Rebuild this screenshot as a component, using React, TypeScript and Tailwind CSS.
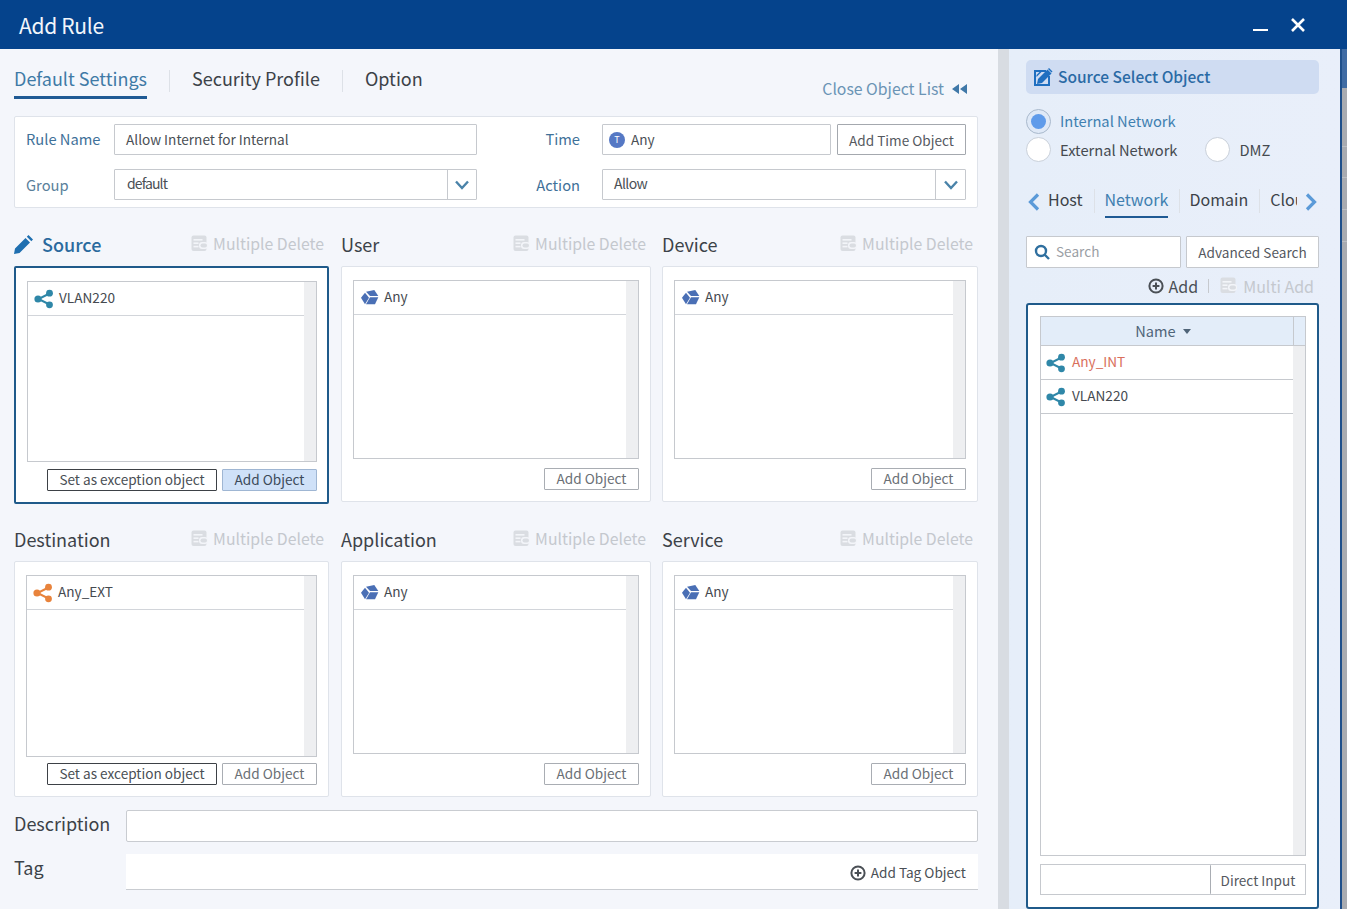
import React from "react";

const Share = ({ c = "#2f87a8", s = 20 }: { c?: string; s?: number }) => (
  <svg width={s} height={s} viewBox="0 0 20 20" fill="none" className="shrink-0">
    <path d="M15.5 4.5 4.5 10l11 5.5" stroke={c} strokeWidth="2" />
    <circle cx="15.5" cy="4.2" r="3.4" fill={c} />
    <circle cx="4" cy="10" r="3.6" fill={c} />
    <circle cx="15.5" cy="15.8" r="3.4" fill={c} />
  </svg>
);

const AnyIcon = () => (
  <svg width="18" height="15" viewBox="0 0 18 15" className="ml-[1px] shrink-0" fill="#4a6fb5">
    <path d="M0 7.700 4 2.700 8 7.700 4 14.300Z" />
    <path d="M5 1.700 13.300 0 17.300 6 9 6Z" />
    <path d="M9 7.300 17.300 7.300 14 14.300 5 14.300Z" />
  </svg>
);

const DelIcon = () => (
  <svg width="17" height="17" viewBox="0 0 17 17" className="shrink-0">
    <rect x="0.5" y="0.5" width="15" height="15.5" rx="2" fill="#dadde2" />
    <rect x="2.5" y="4" width="9" height="1.6" fill="#f3f5f9" />
    <rect x="2.5" y="7.4" width="5" height="1.6" fill="#f3f5f9" />
    <rect x="2.5" y="10.8" width="5" height="1.6" fill="#f3f5f9" />
    <rect x="8" y="7" width="9" height="7" rx="3" fill="#f3f5f9" />
    <rect x="9.5" y="8.4" width="6.5" height="4.2" rx="2" fill="#dadde2" />
  </svg>
);

const AddIcon = () => (
  <svg width="16" height="16" viewBox="0 0 16 16" className="shrink-0" fill="none">
    <circle cx="8" cy="8" r="6.6" stroke="#4a4f55" strokeWidth="2" />
    <path d="M8 4.6v6.8M4.6 8h6.8" stroke="#4a4f55" strokeWidth="2" />
  </svg>
);

const Chev = () => (
  <svg width="16" height="10" viewBox="0 0 16 10" fill="none">
    <path d="M2 1.5 8 8l6-6.500" stroke="#4a83a9" strokeWidth="2.400" />
  </svg>
);

const Arrow = ({ left }: { left?: boolean }) => (
  <svg width="12" height="18" viewBox="0 0 12 18" fill="none" className="shrink-0">
    <path d={left ? "M10 1.500 2.500 9l7.500 7.500" : "M2 1.500 9.500 9 2 16.500"} stroke="#5b9ad8" strokeWidth="3.200" />
  </svg>
);

const Btn = ({ className, children }: { className: string; children: React.ReactNode }) => (
  <div className={`flex items-center justify-center whitespace-nowrap rounded-[1px] border text-[13.6px] leading-none ${className}`}>{children}</div>
);

const Multi = () => (
  <div className="ml-auto mr-[5px] flex items-center gap-[5px] pb-[3px] text-[15.800px] text-[#c4c8ce]">
    <DelIcon />
    <span>Multiple Delete</span>
  </div>
);

const List = ({ h, icon, label }: { h: string; icon: React.ReactNode; label: string }) => (
  <div className={`flex border border-[#c6c9ce] bg-white ${h}`}>
    <div className="min-w-0 flex-1">
      <div className="flex h-[34px] items-center gap-[5px] border-b border-[#d2d5da] pl-[6px] text-[13.6px] text-[#454a50]">
        {icon}
        <span className="mb-[3px]">{label}</span>
      </div>
    </div>
    <div className="w-[12px] bg-[#eeeff1]" />
  </div>
);

const Section = ({
  w,
  gap,
  title,
  active,
  list,
  pad,
  buttons,
}: {
  w: string;
  gap?: string;
  title: React.ReactNode;
  active?: boolean;
  list: React.ReactNode;
  pad: string;
  buttons: React.ReactNode;
}) => (
  <div className={`${w} ${gap ?? ""}`}>
    <div className="flex h-[58px] items-center pt-[16px]">
      {title}
      <Multi />
    </div>
    <div className={`flex flex-col rounded-[2px] bg-white pb-[11px] ${pad} ${active ? "border-2 border-[#1f5a8a]" : "border border-[#dfe3ea]"}`}>
      {list}
      <div className="mt-auto flex justify-end gap-[5px]">{buttons}</div>
    </div>
  </div>
);

const H = ({ children }: { children: React.ReactNode }) => <span className="mb-[2px] text-[18px] text-[#3c4248]">{children}</span>;

const AddObj = ({ active }: { active?: boolean }) => (
  <Btn className={`h-[22px] w-[95px] pb-[1px] ${active ? "border-[#9fb6d3] bg-[#cfe1f8] text-[#3c4a5a]" : "border-[#a9adb3] bg-white text-[#6a6f75]"}`}>Add Object</Btn>
);
const Except = () => (
  <Btn className="h-[22px] w-[170px] border-[#3d4146] bg-white pb-[1px] text-[#4a4f55]">Set as exception object</Btn>
);

const Divider = () => <div className="h-[24px] w-px bg-[#dde1e7]" />;

export default function App() {
  return (
    <div className="flex h-[909px] w-[1347px] flex-col overflow-hidden bg-[#a9abb0] font-['Noto_Sans_CJK_KR','Noto_Sans',sans-serif]">
      <header className="flex h-[49px] shrink-0 items-center bg-[#05438c] pl-[19px]">
        <span className="mt-[2px] text-[21px] tracking-[-0.3px] text-[#f2f6fb]">Add Rule</span>
        <div className="ml-auto mr-[41px] flex items-center">
          <div className="mt-[11px] h-[2.500px] w-[15px] bg-white" />
          <svg width="16" height="16" viewBox="0 0 16 16" className="ml-[22px]" fill="none">
            <path d="M2 2l12 12M14 2 2 14" stroke="#fff" strokeWidth="2.600" />
          </svg>
        </div>
      </header>

      <div className="flex min-h-0 flex-1">
        {/* main form */}
        <main className="w-[998px] shrink-0 bg-[#f4f6fb] pl-[14px] pr-[20px]">
          <div className="flex h-[50px] items-start">
            <div className="mt-[15px] h-[35px] w-[133px] whitespace-nowrap border-b-[3px] border-[#1f5a94] text-[18px] leading-[28px] text-[#3f7aa6]">Default Settings</div>
            <div className="ml-[22px] mt-[21px] h-[22px] w-px bg-[#dde1e7]" />
            <div className="ml-[22px] mt-[15px] whitespace-nowrap text-[18px] leading-[28px] text-[#3c4248]">Security Profile</div>
            <div className="ml-[22px] mt-[21px] h-[22px] w-px bg-[#dde1e7]" />
            <div className="ml-[22px] mt-[15px] text-[18px] leading-[28px] text-[#3c4248]">Option</div>
            <div className="ml-auto mr-[11px] mt-[28px] flex items-center gap-[8px] text-[15.800px] leading-[24px] text-[#6b94b5]">
              <span>Close Object List</span>
              <svg width="15" height="10" viewBox="0 0 15 10" fill="#3f78a8">
                <path d="M7 0v10L0 5zM15 0v10L8 5z" />
              </svg>
            </div>
          </div>

          <section className="mt-[17px] flex h-[92px] flex-col gap-[14px] rounded-[2px] border border-[#dfe3ea] bg-white pl-[11px] pt-[7px]">
            <div className="flex h-[31px] items-center text-[14.700px]">
              <span className="w-[88px] text-[#3f7199]">Rule Name</span>
              <div className="flex h-full w-[363px] items-center rounded-[1px] border border-[#c6c9ce] pl-[11px] text-[13.6px] text-[#4a4f55]">Allow Internet for Internal</div>
              <span className="w-[103px] text-right text-[#3f7199]">Time</span>
              <div className="ml-[22px] flex h-full w-[229px] items-center gap-[6px] rounded-[1px] border border-[#c6c9ce] pl-[6px] text-[13.6px] text-[#4a4f55]">
                <span className="flex h-[16px] w-[16px] items-center justify-center rounded-full bg-[#5578c4] text-[9px] leading-none text-white">T</span>
                Any
              </div>
              <Btn className="ml-[6px] h-full w-[129px] border-[#a4a8ae] pt-[2px] text-[#55595f]">Add Time Object</Btn>
            </div>
            <div className="flex h-[31px] items-center text-[14.700px]">
              <span className="mt-[2px] w-[88px] text-[#5a7f9b]">Group</span>
              <div className="flex h-full w-[363px] rounded-[1px] border border-[#c6c9ce] text-[14px] text-[#4a4f55]">
                <span className="flex flex-1 items-center pb-[2px] pl-[12px] tracking-[-0.9px]">default</span>
                <span className="flex w-[29px] items-center justify-center border-l border-[#c6c9ce]"><Chev /></span>
              </div>
              <span className="mt-[2px] w-[103px] text-right text-[#3f7199]">Action</span>
              <div className="ml-[22px] flex h-full w-[364px] rounded-[1px] border border-[#c6c9ce] text-[14px] text-[#4a4f55]">
                <span className="flex flex-1 items-center pb-[2px] pl-[11px] tracking-[-0.6px]">Allow</span>
                <span className="flex w-[30px] items-center justify-center border-l border-[#c6c9ce]"><Chev /></span>
              </div>
            </div>
          </section>

          <div className="flex">
            <Section
              w="w-[315px]"
              active
              pad="h-[238px] pl-[11px] pr-[10px] pt-[13px]"
              title={
                <span className="mb-[2px] flex items-center gap-[9px] text-[18px] font-medium text-[#2a6a9e]">
                  <svg width="19" height="19" viewBox="0 0 19 19" fill="#1f6fb0">
                    <path d="M0 19l1-5.500L11.500 3l4.500 4.500L5.500 18zM12.800 1.700 14.500 0 19 4.500l-1.700 1.700z" />
                  </svg>
                  Source
                </span>
              }
              list={<List h="h-[181px]" icon={<Share />} label="VLAN220" />}
              buttons={<><Except /><AddObj active /></>}
            />
            <Section
              w="w-[310px]"
              gap="ml-[12px]"
              pad="h-[236px] pl-[11px] pr-[11px] pt-[13px]"
              title={<H>User</H>}
              list={<List h="h-[179px]" icon={<AnyIcon />} label="Any" />}
              buttons={<AddObj />}
            />
            <Section
              w="w-[316px]"
              gap="ml-[11px]"
              pad="h-[236px] pl-[11px] pr-[11px] pt-[13px]"
              title={<H>Device</H>}
              list={<List h="h-[179px]" icon={<AnyIcon />} label="Any" />}
              buttons={<AddObj />}
            />
          </div>

          <div className="-mt-[1px] flex">
            <Section
              w="w-[315px]"
              pad="h-[236px] pl-[11px] pr-[11px] pt-[13px]"
              title={<H>Destination</H>}
              list={<List h="h-[182px]" icon={<Share c="#e8833c" />} label="Any_EXT" />}
              buttons={<><Except /><AddObj /></>}
            />
            <Section
              w="w-[310px]"
              gap="ml-[12px]"
              pad="h-[236px] pl-[11px] pr-[11px] pt-[13px]"
              title={<H>Application</H>}
              list={<List h="h-[179px]" icon={<AnyIcon />} label="Any" />}
              buttons={<AddObj />}
            />
            <Section
              w="w-[316px]"
              gap="ml-[11px]"
              pad="h-[236px] pl-[11px] pr-[11px] pt-[13px]"
              title={<H>Service</H>}
              list={<List h="h-[179px]" icon={<AnyIcon />} label="Any" />}
              buttons={<AddObj />}
            />
          </div>

          <div className="mt-[13px] flex h-[32px] items-center">
            <span className="mb-[6px] w-[112px] text-[18px] text-[#3c4248]">Description</span>
            <div className="h-full flex-1 rounded-[2px] border border-[#c9ccd1] bg-white" />
          </div>
          <div className="mt-[12px] flex h-[36px] items-center">
            <span className="mb-[10px] w-[112px] text-[18px] text-[#3c4248]">Tag</span>
            <div className="flex h-full flex-1 items-center justify-end gap-[5px] border-b border-[#c9ccd1] bg-white pr-[12px] pt-[2px] text-[13.6px] text-[#4a4f55]">
              <AddIcon />
              Add Tag Object
            </div>
          </div>
        </main>

        <div className="w-[11px] shrink-0 bg-[#d8dce2]" />

        {/* object list */}
        <aside className="w-[331px] shrink-0 bg-gradient-to-r from-[#e6eef9] to-[#e9effa] pl-[17px]">
          <div className="mt-[11px] flex h-[34px] w-[293px] items-center gap-[5px] rounded-[5px] bg-[#cfdcf2] pl-[7px] text-[15.500px] font-medium text-[#2a6aa5]">
            <svg width="20" height="20" viewBox="0 0 20 20" fill="none">
              <path d="M1 3h12v2H3v12h12V9h2v10H1z" fill="#1f6fc0" />
              <path d="M3.500 8 8 3.500h2L3.500 10z" fill="#1f6fc0" />
              <path d="M4 17l1-5L14.500 2.500 18.500 6.500 9 16z" fill="#1f6fc0" />
              <path d="M16 1l3.500 3.500-1 1L15 2z" fill="#1f6fc0" />
            </svg>
            <span className="mb-[1px]">Source Select Object</span>
          </div>

          <div className="mt-[15px] flex h-[25px] items-center text-[14.700px] text-[#3f7fb0]">
            <span className="flex h-[25px] w-[25px] items-center justify-center rounded-full border border-[#a9b9cc] bg-[#dfe9f7]">
              <span className="h-[15px] w-[15px] rounded-full bg-[#5f9bea]" />
            </span>
            <span className="mb-[1px] ml-[9px]">Internal Network</span>
          </div>
          <div className="mt-[3px] flex h-[25px] items-center text-[14.700px] text-[#454a50]">
            <span className="h-[25px] w-[25px] rounded-full border border-[#c9d0da] bg-white" />
            <span className="ml-[9px] mt-[1px]">External Network</span>
            <span className="ml-[28px] h-[25px] w-[25px] rounded-full border border-[#c9d0da] bg-white" />
            <span className="ml-[9px] mt-[1px]">DMZ</span>
          </div>

          <div className="mt-[21px] flex h-[35px] w-[293px] items-start text-[16px] leading-[33px] text-[#3c4248]">
            <div className="ml-[2px] mt-[10px]"><Arrow left /></div>
            <span className="ml-[8px]">Host</span>
            <div className="ml-[11px] mt-[6px]"><Divider /></div>
            <div className="ml-[10px] h-[35px] w-[63px] border-b-[2.500px] border-[#1f5a94] text-center text-[#3f7fb0]">Network</div>
            <div className="ml-[11px] mt-[6px]"><Divider /></div>
            <span className="ml-[10px]">Domain</span>
            <div className="ml-[11px] mt-[6px]"><Divider /></div>
            <span className="ml-[10px] w-[27px] overflow-hidden">Cloud</span>
            <div className="ml-[8px] mt-[10px]"><Arrow /></div>
          </div>

          <div className="mt-[18px] flex h-[32px] w-[293px] gap-[5px]">
            <div className="flex w-[155px] items-center gap-[6px] rounded-[1px] border border-[#c6c9ce] bg-white pl-[7px] text-[13.6px] text-[#9a9ea4]">
              <svg width="16" height="16" viewBox="0 0 16 16" fill="none">
                <circle cx="7" cy="7" r="5" stroke="#2f6f9f" strokeWidth="2.400" />
                <path d="M10.500 10.500 15 15" stroke="#2f6f9f" strokeWidth="2.400" />
              </svg>
              <span className="mb-[2px]">Search</span>
            </div>
            <Btn className="flex-1 border-[#c6c9ce] bg-white pt-[1px] text-[#55595f]">Advanced Search</Btn>
          </div>

          <div className="flex h-[35px] w-[288px] items-center justify-end text-[16px] text-[#4a4f55]">
            <AddIcon />
            <span className="ml-[5px]">Add</span>
            <span className="ml-[10px] h-[14px] w-px bg-[#c6c9ce]" />
            <span className="ml-[11px]"><DelIcon /></span>
            <span className="ml-[6px] text-[#c4c8ce]">Multi Add</span>
          </div>

          <div className="h-[606px] w-[293px] rounded-[3px] border-2 border-[#1f5a8a] bg-white pl-[12px] pr-[11px] pt-[11px]">
            <div className="flex h-[540px] border border-[#c6c9ce]">
              <div className="flex-1">
                <div className="flex h-[29px] items-center justify-center gap-[7px] border-b border-[#c6c9ce] bg-[#e3edf9] pr-[8px] text-[14.600px] text-[#4f6478]">
                  Name
                  <svg width="8" height="5" viewBox="0 0 8 5" fill="#4f6478"><path d="M0 0h8L4 5z" /></svg>
                </div>
                <div className="flex h-[34px] items-center gap-[6px] border-b border-[#c6c9ce] pl-[5px] text-[13.6px] text-[#d9705c]">
                  <Share />
                  <span className="mb-[2px]">Any_INT</span>
                </div>
                <div className="flex h-[34px] items-center gap-[6px] border-b border-[#c6c9ce] pl-[5px] text-[13.6px] text-[#454a50]">
                  <Share />
                  <span className="mb-[2px]">VLAN220</span>
                </div>
              </div>
              <div className="w-[12px] bg-[#eeeff1]">
                <div className="h-[29px] border-b border-l border-[#c6c9ce] bg-[#e3edf9]" />
              </div>
            </div>
            <div className="mt-[8px] flex h-[31px] border border-[#c6c9ce]">
              <div className="flex-1" />
              <Btn className="w-[95px] border-y-0 border-r-0 border-l-[#a9adb3] pt-[2px] text-[#55595f]">Direct Input</Btn>
            </div>
          </div>
        </aside>

        <div className="w-[2px] shrink-0 bg-[#1f4f8a]" />
        <div className="flex-1">
          <div className="h-[39px] bg-[#3f6ba3]" />
          <div className="h-[59px] border-b border-[#bcbec2]" />
          <div className="h-[31px] border-b border-[#bcbec2]" />
          <div className="h-[32px] border-b border-[#bcbec2]" />
          <div className="h-[32px] border-b border-[#bcbec2]" />
        </div>
      </div>
    </div>
  );
}
